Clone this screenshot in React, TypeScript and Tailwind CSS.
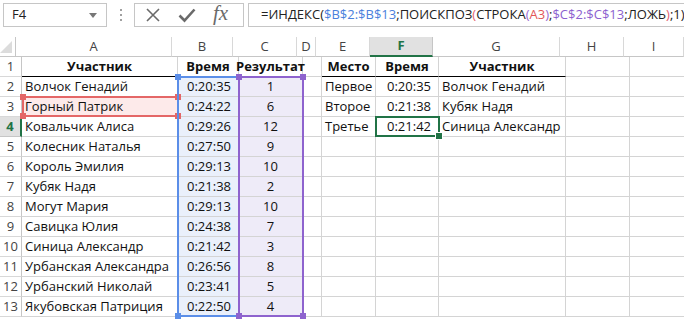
import React from 'react'

const COLS = [
  { key: 'A', w: 156 },
  { key: 'B', w: 61 },
  { key: 'C', w: 64 },
  { key: 'D', w: 19 },
  { key: 'E', w: 54 },
  { key: 'F', w: 63 },
  { key: 'G', w: 127 },
  { key: 'H', w: 64 },
  { key: 'I', w: 60 },
]

type Cell = { t: string; align?: 'l' | 'c' | 'r'; bold?: boolean }

const participants: [string, string, string][] = [
  ['Волчок Генадий', '0:20:35', '1'],
  ['Горный Патрик', '0:24:22', '6'],
  ['Ковальчик Алиса', '0:29:26', '12'],
  ['Колесник Наталья', '0:27:50', '9'],
  ['Король Эмилия', '0:29:13', '10'],
  ['Кубяк Надя', '0:21:38', '2'],
  ['Могут Мария', '0:29:13', '10'],
  ['Савицка Юлия', '0:24:38', '7'],
  ['Синица Александр', '0:21:42', '3'],
  ['Урбанская Александра', '0:26:56', '8'],
  ['Урбанский Николай', '0:23:41', '5'],
  ['Якубовская Патриция', '0:22:50', '4'],
]

const places: [string, string, string][] = [
  ['Первое', '0:20:35', 'Волчок Генадий'],
  ['Второе', '0:21:38', 'Кубяк Надя'],
  ['Третье', '0:21:42', 'Синица Александр'],
]

function rowCells(r: number): (Cell | null)[] {
  if (r === 1) {
    return [
      { t: 'Участник', align: 'c', bold: true },
      { t: 'Время', align: 'c', bold: true },
      { t: 'Результат', align: 'c', bold: true },
      null,
      { t: 'Место', align: 'c', bold: true },
      { t: 'Время', align: 'c', bold: true },
      { t: 'Участник', align: 'c', bold: true },
      null,
      null,
    ]
  }
  const p = participants[r - 2]
  const pl = places[r - 2]
  return [
    { t: p[0] },
    { t: p[1], align: 'r' },
    { t: p[2], align: 'c' },
    null,
    pl ? { t: pl[0] } : null,
    pl ? { t: pl[1], align: 'r' } : null,
    pl ? { t: pl[2] } : null,
    null,
    null,
  ]
}

// fill colour of referenced ranges (formula edit mode)
function cellBg(r: number, key: string) {
  if (key === 'A' && r === 3) return 'bg-[#fdeaea]'
  if (key === 'B' && r >= 2) return 'bg-[#eaf0fb]'
  if (key === 'C' && r >= 2) return 'bg-[#eeebf8]'
  return ''
}

function Formula() {
  return (
    <span className="whitespace-nowrap text-[#222]">
      =ИНДЕКС(<span className="text-[#4a80dc]">$B$2:$B$13</span>;ПОИСКПОЗ
      <span className="text-[#e4606f]">(</span>СТРОКА
      <span className="text-[#9a6bd2]">(</span>
      <span className="text-[#e25757]">A3</span>
      <span className="text-[#9a6bd2]">)</span>;
      <span className="text-[#8c5fd0]">$C$2:$C$13</span>;ЛОЖЬ
      <span className="text-[#e4606f]">)</span>;1)
    </span>
  )
}

// coloured outline with corner handles, drawn over the grid
function Range({ className, handle, left = true }: { className: string; handle: string; left?: boolean }) {
  return (
    <div className={`absolute border-2 pointer-events-none ${className}`}>
      {left && <span className={`absolute -left-[4px] -top-[4px] w-[6px] h-[6px] ${handle}`} />}
      {left && <span className={`absolute -left-[4px] -bottom-[4px] w-[6px] h-[6px] ${handle}`} />}
      <span className={`absolute -right-[4px] -top-[4px] w-[6px] h-[6px] ${handle}`} />
      <span className={`absolute -right-[4px] -bottom-[4px] w-[6px] h-[6px] ${handle}`} />
    </div>
  )
}

export default function App() {
  const rows = Array.from({ length: 13 }, (_, i) => i + 1)
  return (
    <div className="w-[684px] h-[319px] overflow-hidden bg-white text-[13px] text-[#111]"
      style={{ fontFamily: '"Open Sans", "Noto Sans", sans-serif' }}>
      {/* formula bar */}
      <div className="h-[37px] flex items-start pt-[3px] pl-[3px]">
        <div className="w-[104px] h-[24px] border border-[#c6c6c6] flex items-center justify-between pl-[8px] pr-[9px]">
          <span className="text-[#222]">F4</span>
          <svg width="8" height="5" viewBox="0 0 8 5"><path d="M0 0h8L4 5z" fill="#777" /></svg>
        </div>
        <div className="w-[27px] h-[24px] flex flex-col items-center justify-center gap-[3px]">
          <span className="w-[2px] h-[2px] bg-[#a0a0a0]" />
          <span className="w-[2px] h-[2px] bg-[#a0a0a0]" />
          <span className="w-[2px] h-[2px] bg-[#a0a0a0]" />
        </div>
        <div className="w-[110px] h-[24px] border border-[#c6c6c6] flex items-center pl-[10px] gap-[17px]">
          <svg width="16" height="16" viewBox="0 0 16 16">
            <path d="M2 2L14 14M14 2L2 14" stroke="#6a6a6a" strokeWidth="1.6" />
          </svg>
          <svg width="18" height="16" viewBox="0 0 18 16">
            <path d="M1.5 8.5L6.5 13.5L16.5 2.5" stroke="#6a6a6a" strokeWidth="2.6" fill="none" />
          </svg>
          <span className="italic text-[21px] leading-none text-[#6a6a6a] -mt-[3px]"
            style={{ fontFamily: '"Liberation Serif", serif' }}>fx</span>
        </div>
        <div className="ml-[4px] flex-1 h-[24px] border border-[#c6c6c6] border-r-0 flex items-center pl-[12px] overflow-hidden">
          <Formula />
        </div>
      </div>

      {/* sheet */}
      <div className="relative">
        {/* column headers */}
        <div className="flex h-[20px]">
          <div className="w-[22px] h-full border-r border-b border-[#c6c6c6] flex items-end justify-end pr-[3px] pb-[3px]">
            <svg width="12" height="12" viewBox="0 0 12 12">
              <path d="M12 0V12H0z" fill="#dcdcdc" />
            </svg>
          </div>
          {COLS.map(c => (
            <div key={c.key} style={{ width: c.w }}
              className={
                c.key === 'F'
                  ? 'h-full shrink-0 bg-[#e1e1e1] border-r border-[#c6c6c6] border-b-2 border-b-[#217346] flex items-center justify-center font-bold text-[#217346]'
                  : 'h-full shrink-0 border-r border-b border-[#d8d8d8] border-b-[#c6c6c6] flex items-center justify-center text-[#444]'
              }>
              {c.key}
            </div>
          ))}
        </div>

        {rows.map(r => (
          <div key={r} className="flex h-[20px]">
            <div className={
              r === 4
                ? 'w-[22px] h-full shrink-0 bg-[#e1e1e1] border-b border-[#c6c6c6] border-r-2 border-r-[#217346] flex items-center justify-center font-bold text-[#217346]'
                : 'w-[22px] h-full shrink-0 border-b border-[#d8d8d8] border-r border-r-[#c6c6c6] flex items-center justify-center text-[#444]'
            }>
              {r}
            </div>
            {rowCells(r).map((cell, i) => {
              const col = COLS[i]
              const thick = r === 1 && ['A', 'B', 'C', 'E', 'F', 'G'].includes(col.key)
              return (
                <div key={col.key} style={{ width: col.w }}
                  className={`h-full shrink-0 border-r border-[#d4d4d4] flex items-center whitespace-nowrap ${cellBg(r, col.key)} ${
                    thick ? 'border-b border-b-[#000]' : 'border-b'
                  } ${
                    cell?.align === 'c' ? 'justify-center' : cell?.align === 'r' ? 'justify-end pr-[7px]' : 'pl-[3px]'
                  } ${cell?.bold ? 'font-bold' : ''}`}>
                  {cell?.t}
                </div>
              )
            })}
          </div>
        ))}

        {/* referenced ranges */}
        <Range className="left-[22px] top-[59px] w-[157px] h-[21px] border-[#e46767]" handle="bg-[#e46767]" />
        <Range className="left-[177px] top-[39px] w-[63px] h-[241px] border-[#5b8ee8]" handle="bg-[#5b8ee8]" />
        <Range className="left-[238px] top-[39px] w-[66px] h-[241px] border-[#8e63ce]" handle="bg-[#8e63ce]" />

        {/* active cell F4 */}
        <div className="absolute left-[375px] top-[79px] w-[65px] h-[21px] border-2 border-[#217346] pointer-events-none">
          <span className="absolute -right-[4px] -bottom-[4px] w-[6px] h-[6px] bg-[#217346] outline outline-1 outline-white" />
        </div>
      </div>
    </div>
  )
}
